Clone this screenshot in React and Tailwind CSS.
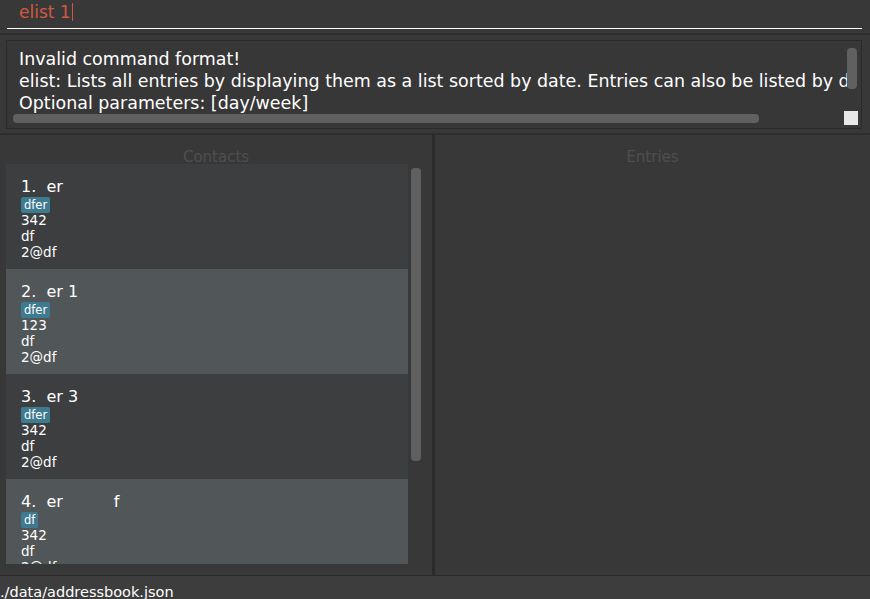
import React from "react";

const contacts = [
  { n: "1.  er", tag: "dfer", phone: "342", addr: "df", email: "2@df", light: false },
  { n: "2.  er 1", tag: "dfer", phone: "123", addr: "df", email: "2@df", light: true },
  { n: "3.  er 3", tag: "dfer", phone: "342", addr: "df", email: "2@df", light: false },
  { n: "4.  er          f", tag: "df", phone: "342", addr: "df", email: "2@df", light: true },
];

function Card({ c }) {
  return (
    <div className={`${c.light ? "bg-[#515658]" : "bg-[#3c3e3f]"} h-[105px] shrink-0 pl-[15px] pt-[12px] text-white`}>
      <div className="text-[16px] leading-[20px] whitespace-pre mt-[1px]">{c.n}</div>
      <div className="flex">
        <span className="bg-[#3e7b91] rounded-[2px] text-[11.5px] leading-[16px] px-[3px]">{c.tag}</span>
      </div>
      <div className="text-[13.5px] leading-[16px] mt-[-1px]">{c.phone}</div>
      <div className="text-[13.5px] leading-[16px]">{c.addr}</div>
      <div className="text-[13.5px] leading-[16px]">{c.email}</div>
    </div>
  );
}

export default function App() {
  return (
    <div className="w-[870px] h-[599px] bg-[#383838] flex flex-col overflow-hidden font-['DejaVu_Sans',sans-serif]">
      {/* command box */}
      <div className="h-[33px] shrink-0">
        <div className="mx-[7px] w-[855px] h-[29px] border-b border-white pl-[12px] flex items-center">
          <span className="text-[17px] leading-[24px] text-[#d0583f] mt-[-4px]">elist 1</span>
          <span className="w-[1px] h-[18px] bg-[#d0583f] ml-[1px] mt-[-4px]"></span>
        </div>
      </div>
      <div className="h-[2px] shrink-0 bg-[#2d2d2d]"></div>
      {/* result box */}
      <div className="h-[99px] shrink-0 pt-[5px] px-[6px]">
        <div className="w-[856px] h-[89px] border border-[#2a2a2a] bg-[#373737] relative flex">
          <div className="flex-1 overflow-hidden pl-[12px] pt-[7px] pr-[0px] text-white text-[17.45px] leading-[22px] whitespace-pre">
            <div>Invalid command format!</div>
            <div>elist: Lists all entries by displaying them as a list sorted by date. Entries can also be listed by day or week.</div>
            <div>Optional parameters: [day/week]</div>
          </div>
          <div className="w-[14px] shrink-0 flex flex-col items-start pt-[7px]">
            <div className="w-[10px] h-[41px] rounded-[4px] bg-[#606060]"></div>
          </div>
          <div className="absolute left-[6px] top-[73px] w-[746px] h-[9px] rounded-[4px] bg-[#606060]"></div>
          <div className="absolute left-[837px] top-[70px] w-[14px] h-[14px] bg-[#e8e8e8]"></div>
        </div>
      </div>
      <div className="h-[2px] shrink-0 bg-[#2d2d2d] mt-[-1px]"></div>
      {/* main panels */}
      <div className="flex-1 flex min-h-0">
        <div className="w-[432px] shrink-0 flex flex-col">
          <div className="h-[29px] shrink-0 flex items-end justify-center text-[15px] leading-[20px] text-[#4f4f4f]">
            <span className="mb-[-3px]">Contacts</span>
          </div>
          <div className="flex h-[400px] pl-[6px]">
            <div className="w-[402px] flex flex-col overflow-hidden">
              {contacts.map((c, i) => (
                <Card key={i} c={c} />
              ))}
            </div>
            <div className="w-[24px] pl-[3px] pt-[4px]">
              <div className="w-[10px] h-[293px] rounded-[4px] bg-[#606060]"></div>
            </div>
          </div>
        </div>
        <div className="w-[3px] shrink-0 bg-[#2b2b2b]"></div>
        <div className="flex-1 flex flex-col">
          <div className="h-[29px] shrink-0 flex items-end justify-center text-[15px] leading-[20px] text-[#4f4f4f]">
            <span className="mb-[-3px]">Entries</span>
          </div>
        </div>
      </div>
      <div className="h-[24px] shrink-0 border-t border-[#2b2b2b] bg-[#3d3d3d] text-white text-[14.5px] leading-[20px] pt-[6px] whitespace-pre">
        ./data/addressbook.json
      </div>
    </div>
  );
}
